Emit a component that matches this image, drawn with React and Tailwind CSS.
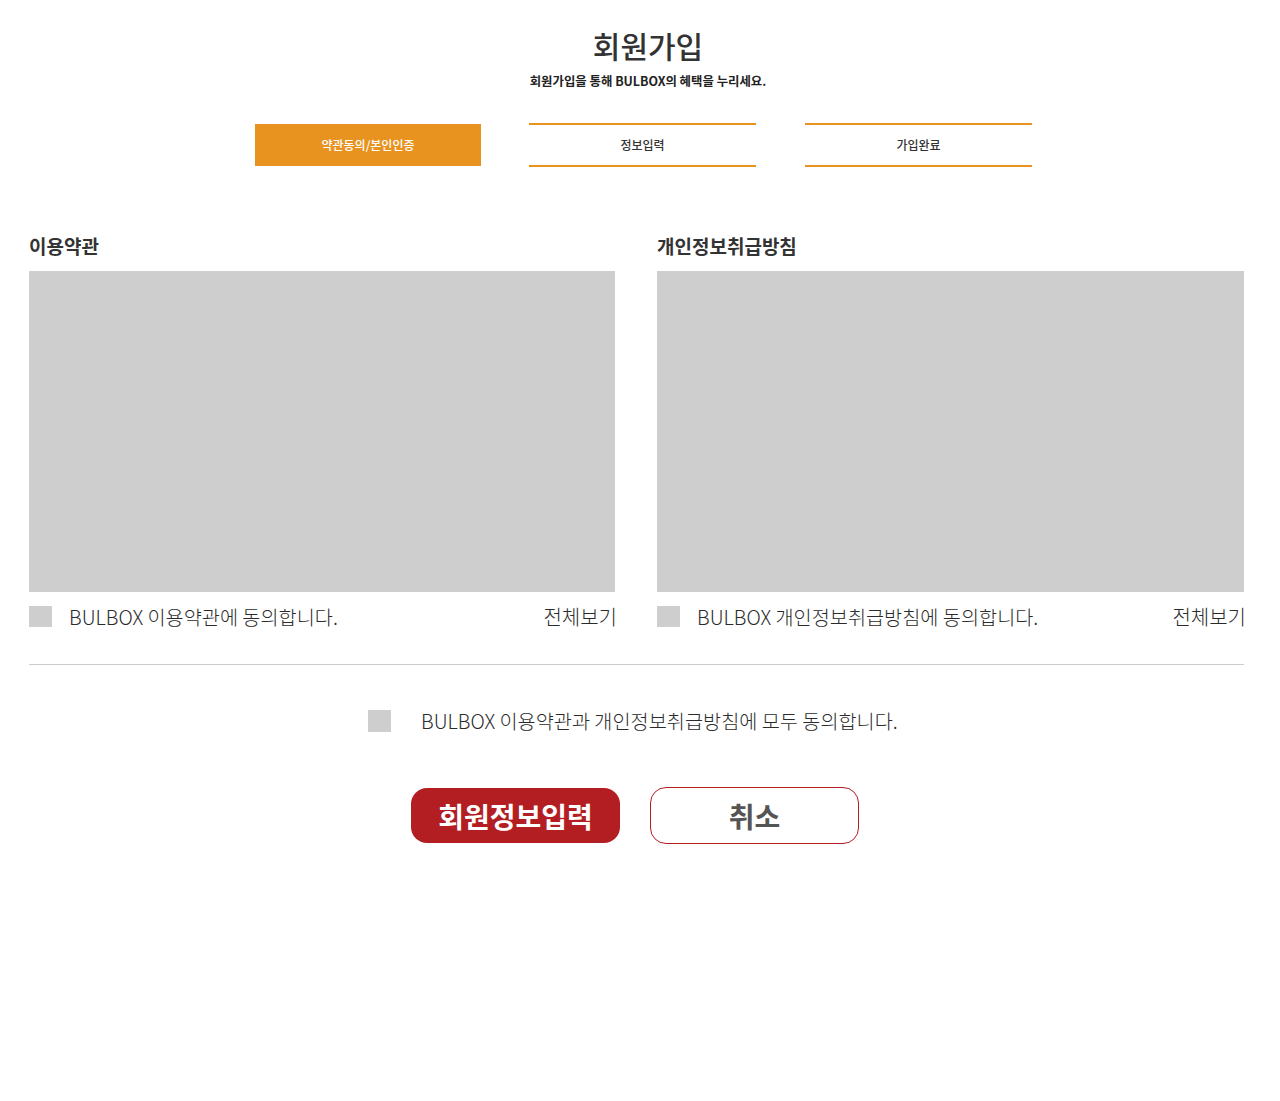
import React from 'react';

const font = { fontFamily: '"Noto Sans CJK KR", "Noto Sans", sans-serif' };

const steps = [
  { label: '약관동의/본인인증', active: true },
  { label: '정보입력', active: false },
  { label: '가입완료', active: false },
];

const Terms = ({ title, agree }) => (
  <div className="flex flex-col">
    <h3 className="text-[19px] font-bold text-[#333] leading-[24px] h-[24px] mb-[13px]">{title}</h3>
    <div className="h-[321px] bg-[#cecece]" />
    <div className="flex items-center justify-between mt-[14px] h-[21px]">
      <label className="flex items-center">
        <span className="w-[23px] h-[21px] bg-[#cecece]" />
        <span className="ml-[17px] text-[19.7px] font-light text-[#2b2b2b] leading-none">{agree}</span>
      </label>
      <button className="-mr-[2px] text-[20px] font-light text-[#2b2b2b] leading-none">전체보기</button>
    </div>
  </div>
);

export default function App() {
  return (
    <div className="w-[1280px] h-[1101px] bg-white" style={font}>
      {/* 헤더 */}
      <div className="flex flex-col items-center pt-[26px] pl-[16px]">
        <h1 className="text-[30px] font-medium text-[#333] leading-[38px]">회원가입</h1>
        <p className="mt-[9px] text-[12.4px] font-bold text-[#222] leading-[16px]">회원가입을 통해 BULBOX의 혜택을 누리세요.</p>
      </div>

      {/* 단계 */}
      <div className="flex pl-[255px] mt-[34px]">
        {steps.map((s, i) =>
          s.active ? (
            <div key={s.label} className="w-[226px] h-[42px] mt-[1px] bg-[#e8931f] text-white text-[12px] font-medium flex items-center justify-center">
              {s.label}
            </div>
          ) : (
            <div
              key={s.label}
              className={`${i === 1 ? 'ml-[48px]' : 'ml-[49px]'} w-[227px] h-[44px] border-y-2 border-[#e8931f] text-[#333] text-[12px] font-medium flex items-center justify-center`}
            >
              {s.label}
            </div>
          )
        )}
      </div>

      {/* 약관 */}
      <div className="pl-[29px] pr-[36px] mt-[67px]">
        <div className="grid grid-cols-[586px_587px] gap-[42px]">
          <Terms title="이용약관" agree="BULBOX 이용약관에 동의합니다." />
          <Terms title="개인정보취급방침" agree="BULBOX 개인정보취급방침에 동의합니다." />
        </div>
        <div className="mt-[37px] border-t border-[#cccccc]" />
      </div>

      {/* 전체 동의 */}
      <div className="flex items-center pl-[368px] mt-[45px]">
        <span className="w-[23px] h-[22px] bg-[#cecece]" />
        <span className="ml-[30px] text-[19.7px] font-light text-[#2b2b2b] leading-none">BULBOX 이용약관과 개인정보취급방침에 모두 동의합니다.</span>
      </div>

      {/* 버튼 */}
      <div className="flex pl-[411px] gap-[30px] mt-[56px]">
        <button className="w-[209px] h-[55px] rounded-[16px] bg-[#b31e23] text-white text-[28px] font-bold">회원정보입력</button>
        <button className="w-[209px] h-[57px] -mt-[1px] rounded-[16px] border border-[#b31e23] bg-white text-[#555] text-[28px] font-bold">취소</button>
      </div>
    </div>
  );
}
